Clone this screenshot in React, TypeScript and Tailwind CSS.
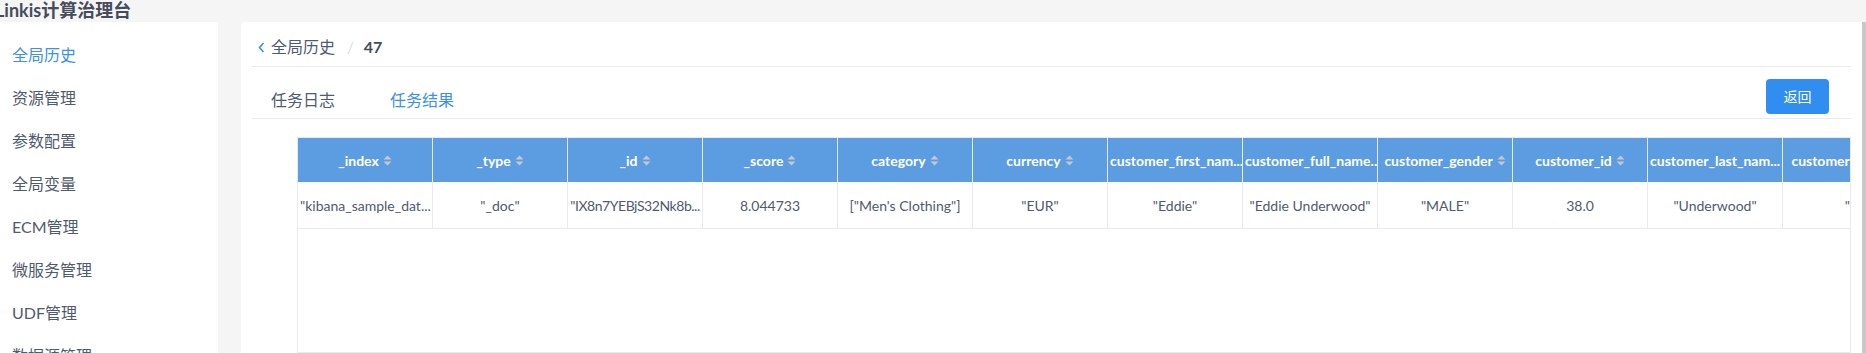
import React from "react";

const FONT = { fontFamily: 'Lato, "Noto Sans CJK SC", sans-serif' };

const menu = ["全局历史", "资源管理", "参数配置", "全局变量", "ECM管理", "微服务管理", "UDF管理", "数据源管理"];

const cols: { h: string; v: string; tight?: boolean }[] = [
  { h: "_index", v: '"kibana_sample_dat...' },
  { h: "_type", v: '"_doc"' },
  { h: "_id", v: '"IX8n7YEBjS32Nk8b...', tight: true },
  { h: "_score", v: "8.044733" },
  { h: "category", v: '["Men\'s Clothing"]' },
  { h: "currency", v: '"EUR"' },
  { h: "customer_first_nam...", v: '"Eddie"' },
  { h: "customer_full_name..", v: '"Eddie Underwood"' },
  { h: "customer_gender", v: '"MALE"' },
  { h: "customer_id", v: "38.0" },
  { h: "customer_last_nam...", v: '"Underwood"' },
  { h: "customer_phone", v: '""' },
];

function SortIcon() {
  return (
    <svg width="9" height="11" viewBox="0 0 9 11" className="shrink-0 ml-[4px]">
      <path d="M4.5 0.5 L8.5 4.5 L0.5 4.5 Z" fill="#c5c8ce" />
      <path d="M0.5 6.5 L8.5 6.5 L4.5 10.5 Z" fill="#c5c8ce" />
    </svg>
  );
}

export default function App() {
  return (
    <div className="w-[1866px] h-[353px] bg-[#f5f5f5] overflow-hidden flex flex-col" style={FONT}>
      <div className="h-[22px] shrink-0 flex items-start">
        <span className="ml-[-5px] text-[18px] leading-[20px] font-bold text-[#464c5b] whitespace-nowrap">Linkis计算治理台</span>
      </div>
      <div className="flex flex-1 min-h-0">
        <div className="w-[218px] shrink-0 bg-white rounded-tr-[4px] pt-[11px]">
          {menu.map((m, i) => (
            <div
              key={m}
              className={`h-[43px] flex items-center pl-[12px] text-[16px] whitespace-nowrap ${i === 0 ? "text-[#3b8ff0]" : "text-[#515a6e]"}`}
            >
              {m}
            </div>
          ))}
        </div>
        <div className="w-[1621px] ml-[23px] shrink-0 bg-white rounded-tl-[4px] px-[11px] flex flex-col">
          <div className="h-[45px] shrink-0 border-b border-[#e8eaec] flex items-center pt-[6px] pl-[6px]">
            <svg width="7" height="11" viewBox="0 0 7 11" className="mr-[6px]">
              <path d="M5.5 1 L1.5 5.5 L5.5 10" stroke="#3b8ff0" strokeWidth="1.6" fill="none" />
            </svg>
            <span className="text-[16px] text-[#515a6e] leading-[22px]">全局历史</span>
            <span className="text-[15px] text-[#dcdee2] ml-[12px] mr-[10px] leading-[22px]">/</span>
            <span className="text-[16px] font-bold text-[#464c5b] leading-[22px]">47</span>
          </div>
          <div className="h-[52px] shrink-0 border-b border-[#e8eaec] flex items-start justify-between">
            <div className="flex pl-[19px] pt-[22px]">
              <span className="text-[16px] leading-[22px] text-[#515a6e]">任务日志</span>
              <span className="text-[16px] leading-[22px] text-[#3b8ff0] ml-[55px]">任务结果</span>
            </div>
            <button className="mt-[12px] mr-[22px] w-[63px] h-[35px] rounded-[4px] bg-[#2f8ef0] text-white text-[14px] flex items-center justify-center">
              返回
            </button>
          </div>
          <div className="mt-[18px] ml-[45px] flex-1 min-h-0 border border-[#e8eaec] overflow-hidden">
            <div className="flex">
              {cols.map((c) => (
                <div key={c.h} className="w-[135px] shrink-0 border-r border-[#e8eaec]">
                  <div className="h-[44px] bg-[#5c9ce0] flex items-center justify-center-safe px-[2px] overflow-hidden text-white text-[14px] font-bold whitespace-nowrap">
                    <span className="shrink-0">{c.h}</span>
                    <SortIcon />
                  </div>
                  <div className="h-[47px] border-b border-[#e8eaec] flex items-center justify-center-safe px-[2px] overflow-hidden text-[14px] text-[#515a6e] whitespace-nowrap">
                    <span className={c.tight ? "shrink-0 tracking-[-0.45px]" : "shrink-0"}>{c.v}</span>
                  </div>
                </div>
              ))}
            </div>
          </div>
        </div>
        <div className="w-[4px] shrink-0 bg-[#c8c8c8]" />
      </div>
    </div>
  );
}
